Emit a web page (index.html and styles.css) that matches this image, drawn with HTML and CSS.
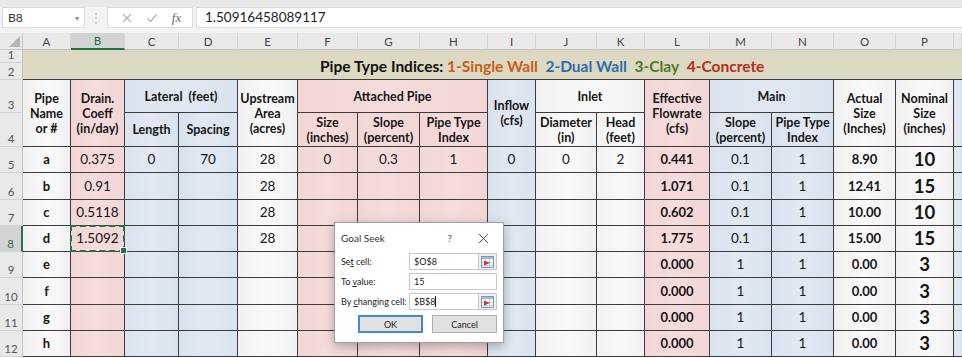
FILE: index.html
```html
<!DOCTYPE html>
<html lang="en">

<head>
  <meta charset="UTF-8">
  <title>Pipe Sizing - Goal Seek</title>
  <link rel="stylesheet" href="styles.css">
</head>

<body>
  <div class="formula-bar">
    <div class="name-box"><span>B8</span><span class="caret">&#9662;</span></div>
    <div class="grip">&#8942;</div>
    <div class="fx-buttons">
      <svg width="12" height="12" viewBox="0 0 12 12"><path d="M2 2l8 8M10 2l-8 8" stroke="#b4b4b4" stroke-width="1.2" fill="none"/></svg>
      <svg width="12" height="12" viewBox="0 0 12 12"><path d="M1.5 6.5l3 3 6-7" stroke="#b4b4b4" stroke-width="1.2" fill="none"/></svg>
      <span class="fx">fx</span>
    </div>
    <div class="formula-input">1.50916458089117</div>
  </div>

  <div class="sheet">
    <!-- column headers -->
    <div class="corner"></div>
    <div class="col-head">A</div>
    <div class="col-head active">B</div>
    <div class="col-head">C</div>
    <div class="col-head">D</div>
    <div class="col-head">E</div>
    <div class="col-head">F</div>
    <div class="col-head">G</div>
    <div class="col-head">H</div>
    <div class="col-head">I</div>
    <div class="col-head">J</div>
    <div class="col-head">K</div>
    <div class="col-head">L</div>
    <div class="col-head">M</div>
    <div class="col-head">N</div>
    <div class="col-head">O</div>
    <div class="col-head">P</div>
    <div class="col-head"></div>

    <!-- rows 1-2 -->
    <div class="row-head">1</div>
    <div class="title">Pipe Type Indices:&nbsp;<span class="t1">1-Single Wall</span>&nbsp;&nbsp;<span class="t2">2-Dual Wall</span>&nbsp;&nbsp;<span class="t3">3-Clay</span>&nbsp;&nbsp;<span class="t4">4-Concrete</span></div>
    <div class="row-head">2</div>

    <!-- rows 3-4 -->
    <div class="row-head">3</div>
    <div class="c hd wh span2">Pipe<br>Name<br>or #</div>
    <div class="c hd pk span2">Drain.<br>Coeff<br>(in/day)</div>
    <div class="c hd bl wide2">Lateral&nbsp; (feet)</div>
    <div class="c hd wh span2">Upstream<br>Area<br>(acres)</div>
    <div class="c hd pk wide3">Attached Pipe</div>
    <div class="c hd bl span2">Inflow<br>(cfs)</div>
    <div class="c hd wh wide2">Inlet</div>
    <div class="c hd pk span2">Effective<br>Flowrate<br>(cfs)</div>
    <div class="c hd bl wide2">Main</div>
    <div class="c hd wh span2">Actual Size<br>(Inches)</div>
    <div class="c hd wh span2">Nominal<br>Size<br>(inches)</div>
    <div class="c bl span2 last"></div>
    <div class="row-head">4</div>
    <div class="c hd bl">Length</div>
    <div class="c hd bl">Spacing</div>
    <div class="c hd pk">Size<br>(inches)</div>
    <div class="c hd pk">Slope<br>(percent)</div>
    <div class="c hd pk">Pipe Type<br>Index</div>
    <div class="c hd wh">Diameter<br>(in)</div>
    <div class="c hd wh">Head<br>(feet)</div>
    <div class="c hd bl">Slope<br>(percent)</div>
    <div class="c hd bl">Pipe Type<br>Index</div>

    <!-- row 5 -->
    <div class="row-head">5</div>
    <div class="c wh b">a</div>
    <div class="c pk">0.375</div>
    <div class="c bl">0</div>
    <div class="c bl">70</div>
    <div class="c wh">28</div>
    <div class="c pk">0</div>
    <div class="c pk">0.3</div>
    <div class="c pk">1</div>
    <div class="c bl">0</div>
    <div class="c wh">0</div>
    <div class="c wh">2</div>
    <div class="c pk b">0.441</div>
    <div class="c bl">0.1</div>
    <div class="c bl">1</div>
    <div class="c wh b">8.90</div>
    <div class="c wh big">10</div>
    <div class="c bl last"></div>

    <!-- row 6 -->
    <div class="row-head">6</div>
    <div class="c wh b">b</div>
    <div class="c pk">0.91</div>
    <div class="c bl"></div>
    <div class="c bl"></div>
    <div class="c wh">28</div>
    <div class="c pk"></div>
    <div class="c pk"></div>
    <div class="c pk"></div>
    <div class="c bl"></div>
    <div class="c wh"></div>
    <div class="c wh"></div>
    <div class="c pk b">1.071</div>
    <div class="c bl">0.1</div>
    <div class="c bl">1</div>
    <div class="c wh b">12.41</div>
    <div class="c wh big">15</div>
    <div class="c bl last"></div>

    <!-- row 7 -->
    <div class="row-head">7</div>
    <div class="c wh b">c</div>
    <div class="c pk">0.5118</div>
    <div class="c bl"></div>
    <div class="c bl"></div>
    <div class="c wh">28</div>
    <div class="c pk"></div>
    <div class="c pk"></div>
    <div class="c pk"></div>
    <div class="c bl"></div>
    <div class="c wh"></div>
    <div class="c wh"></div>
    <div class="c pk b">0.602</div>
    <div class="c bl">0.1</div>
    <div class="c bl">1</div>
    <div class="c wh b">10.00</div>
    <div class="c wh big">10</div>
    <div class="c bl last"></div>

    <!-- row 8 -->
    <div class="row-head active">8</div>
    <div class="c wh b">d</div>
    <div class="c pk sel">1.5092</div>
    <div class="c bl"></div>
    <div class="c bl"></div>
    <div class="c wh">28</div>
    <div class="c pk"></div>
    <div class="c pk"></div>
    <div class="c pk"></div>
    <div class="c bl"></div>
    <div class="c wh"></div>
    <div class="c wh"></div>
    <div class="c pk b">1.775</div>
    <div class="c bl">0.1</div>
    <div class="c bl">1</div>
    <div class="c wh b">15.00</div>
    <div class="c wh big">15</div>
    <div class="c bl last"></div>

    <!-- row 9 -->
    <div class="row-head">9</div>
    <div class="c wh b">e</div>
    <div class="c pk"></div>
    <div class="c bl"></div>
    <div class="c bl"></div>
    <div class="c wh"></div>
    <div class="c pk"></div>
    <div class="c pk"></div>
    <div class="c pk"></div>
    <div class="c bl"></div>
    <div class="c wh"></div>
    <div class="c wh"></div>
    <div class="c pk b">0.000</div>
    <div class="c bl">1</div>
    <div class="c bl">1</div>
    <div class="c wh b">0.00</div>
    <div class="c wh big">3</div>
    <div class="c bl last"></div>

    <!-- row 10 -->
    <div class="row-head">10</div>
    <div class="c wh b">f</div>
    <div class="c pk"></div>
    <div class="c bl"></div>
    <div class="c bl"></div>
    <div class="c wh"></div>
    <div class="c pk"></div>
    <div class="c pk"></div>
    <div class="c pk"></div>
    <div class="c bl"></div>
    <div class="c wh"></div>
    <div class="c wh"></div>
    <div class="c pk b">0.000</div>
    <div class="c bl">1</div>
    <div class="c bl">1</div>
    <div class="c wh b">0.00</div>
    <div class="c wh big">3</div>
    <div class="c bl last"></div>

    <!-- row 11 -->
    <div class="row-head">11</div>
    <div class="c wh b">g</div>
    <div class="c pk"></div>
    <div class="c bl"></div>
    <div class="c bl"></div>
    <div class="c wh"></div>
    <div class="c pk"></div>
    <div class="c pk"></div>
    <div class="c pk"></div>
    <div class="c bl"></div>
    <div class="c wh"></div>
    <div class="c wh"></div>
    <div class="c pk b">0.000</div>
    <div class="c bl">1</div>
    <div class="c bl">1</div>
    <div class="c wh b">0.00</div>
    <div class="c wh big">3</div>
    <div class="c bl last"></div>

    <!-- row 12 -->
    <div class="row-head">12</div>
    <div class="c wh b">h</div>
    <div class="c pk"></div>
    <div class="c bl"></div>
    <div class="c bl"></div>
    <div class="c wh"></div>
    <div class="c pk"></div>
    <div class="c pk"></div>
    <div class="c pk"></div>
    <div class="c bl"></div>
    <div class="c wh"></div>
    <div class="c wh"></div>
    <div class="c pk b">0.000</div>
    <div class="c bl">1</div>
    <div class="c bl">1</div>
    <div class="c wh b">0.00</div>
    <div class="c wh big">3</div>
    <div class="c bl last"></div>
  </div>

  <div class="dialog">
    <div class="dlg-title">
      <span>Goal Seek</span>
      <span class="help">?</span>
      <svg class="close" width="11" height="11" viewBox="0 0 11 11"><path d="M1 1l9 9M10 1l-9 9" stroke="#555" stroke-width="1" fill="none"/></svg>
    </div>
    <div class="dlg-row">
      <label>Se<u>t</u> cell:</label>
      <div class="field">$O$8</div>
      <span class="picker">
        <svg width="13" height="12" viewBox="0 0 13 12"><rect x="0.5" y="0.5" width="12" height="11" fill="#fff" stroke="#7a98bf"/><rect x="1" y="1" width="11" height="2" fill="#9db9dc"/><path d="M1 6.5h11M1 9.5h11M4.5 3v8M8.5 3v8" stroke="#b9c9dd"/><path d="M3 4.5l6 2.5-6 2.5z" fill="#d9312b"/></svg>
      </span>
    </div>
    <div class="dlg-row">
      <label>To <u>v</u>alue:</label>
      <div class="field full">15</div>
    </div>
    <div class="dlg-row">
      <label>By <u>c</u>hanging cell:</label>
      <div class="field">$B$8<span class="cursor"></span></div>
      <span class="picker">
        <svg width="13" height="12" viewBox="0 0 13 12"><rect x="0.5" y="0.5" width="12" height="11" fill="#fff" stroke="#7a98bf"/><rect x="1" y="1" width="11" height="2" fill="#9db9dc"/><path d="M1 6.5h11M1 9.5h11M4.5 3v8M8.5 3v8" stroke="#b9c9dd"/><path d="M3 4.5l6 2.5-6 2.5z" fill="#d9312b"/></svg>
      </span>
    </div>
    <div class="dlg-buttons">
      <button class="btn default">OK</button>
      <button class="btn">Cancel</button>
    </div>
  </div>
</body>

</html>
```

FILE: styles.css
```css
* {
  box-sizing: border-box;
  margin: 0;
  padding: 0;
}

body {
  width: 962px;
  height: 358px;
  overflow: hidden;
  position: relative;
  background: #fff;
  font-family: 'Lato', sans-serif;
  color: #111;
}

/* formula bar */
.formula-bar {
  height: 33px;
  background: #f3f3f3;
  border-top: 7px solid #e8e8e8;
  display: flex;
  align-items: flex-start;
}

.name-box {
  width: 83px;
  height: 21px;
  margin-left: 2px;
  background: #fff;
  border: 1px solid #dcdcdc;
  display: flex;
  align-items: center;
  justify-content: space-between;
  padding: 0 5px;
  font-size: 12px;
  color: #333;
}

.name-box .caret {
  font-size: 8px;
  color: #888;
}

.grip {
  width: 22px;
  height: 21px;
  text-align: center;
  line-height: 21px;
  color: #c0c0c0;
  font-size: 12px;
}

.fx-buttons {
  width: 86px;
  height: 21px;
  background: #fff;
  border: 1px solid #dcdcdc;
  display: flex;
  align-items: center;
  justify-content: space-around;
  padding: 0 4px 0 6px;
}

.fx {
  font-family: 'Liberation Serif', serif;
  font-style: italic;
  font-size: 13px;
  color: #666;
}

.formula-input {
  flex: 1;
  height: 21px;
  margin-left: 3px;
  background: #fff;
  border: 1px solid #dcdcdc;
  border-right: none;
  padding-left: 8px;
  font-size: 13.5px;
  line-height: 19px;
  color: #222;
}

/* sheet grid */
.sheet {
  display: grid;
  grid-template-columns: 23px 48px 54px 54px 59px 60px 60px 62px 68px 48px 61px 48px 65px 62px 62px 62px 58px 1fr;
  grid-template-rows: 17px 13px 17px 33px 34px 26px 27px 26px 26px 26px 27px 26px 26px;
}

.corner {
  background: #e9e9e9;
  border-right: 1px solid #c8c8c8;
  border-bottom: 1px solid #c8c8c8;
  position: relative;
}

.corner::after {
  content: '';
  position: absolute;
  right: 2px;
  bottom: 2px;
  border-left: 11px solid transparent;
  border-bottom: 11px solid #b7b7b7;
}

.col-head {
  background: #e9e9e9;
  border-right: 1px solid #d4d4d4;
  border-bottom: 1px solid #c4c4c4;
  font-size: 11.5px;
  color: #444;
  display: flex;
  align-items: center;
  justify-content: center;
}

.col-head.active {
  background: #d3d3d3;
  color: #217346;
  border-bottom: 2px solid #217346;
}

.row-head {
  background: #e9e9e9;
  border-right: 1px solid #c4c4c4;
  border-bottom: 1px solid #d4d4d4;
  font-size: 11.5px;
  color: #555;
  display: flex;
  align-items: flex-end;
  justify-content: center;
  padding-bottom: 1px;
  line-height: 12px;
}

.row-head.active {
  background: #d3d3d3;
  color: #217346;
  border-right: 2px solid #217346;
}

.title {
  grid-column: 2 / -1;
  grid-row: span 2;
  background: #ddd8c1;
  border-bottom: 1px solid #3c3c3c;
  display: flex;
  align-items: center;
  padding-left: 297px;
  padding-top: 2px;
  font-size: 15.5px;
  font-weight: 700;
  color: #111;
  white-space: nowrap;
}

.t1 { color: #c5621a; }
.t2 { color: #2f6eae; }
.t3 { color: #4f7a28; }
.t4 { color: #b0321e; }

/* cells */
.c {
  display: flex;
  align-items: center;
  justify-content: center;
  text-align: center;
  border-right: 1px solid #3c3c3c;
  border-bottom: 1px solid #3c3c3c;
  font-size: 13.5px;
  line-height: 15px;
  color: #151515;
}

.c.last {
  border-right: none;
}

.hd {
  font-size: 12.5px;
  font-weight: 700;
  line-height: 15px;
}

.span2 { grid-row: span 2; }
.wide2 { grid-column: span 2; }
.wide3 { grid-column: span 3; }

.b { font-weight: 700; font-size: 13px; }
.big { font-weight: 700; font-size: 18.5px; }

.pk { background: linear-gradient(90deg, #f3d5d5, #f6dcdc 50%, #f3d5d5); }
.bl { background: linear-gradient(90deg, #d9e3ef, #e1e8f2 50%, #d9e3ef); }
.wh { background: linear-gradient(90deg, #f1f1f1, #f9f9f9 50%, #f1f1f1); }

.sel {
  position: relative;
}

.sel::after {
  content: '';
  position: absolute;
  left: -1px;
  top: -1px;
  right: -1px;
  bottom: -1px;
  border: 2px dashed #217346;
}

.sel::before {
  content: '';
  position: absolute;
  right: -3px;
  bottom: -3px;
  width: 5px;
  height: 5px;
  background: #217346;
  border: 1px solid #fff;
  z-index: 1;
}

/* goal seek dialog */
.dialog {
  position: absolute;
  left: 334px;
  top: 222px;
  width: 170px;
  height: 121px;
  background: #fff;
  border: 1px solid #a0a0a0;
  box-shadow: 0 3px 10px rgba(0, 0, 0, 0.28);
  padding: 0 6px;
  font-size: 9px;
  color: #222;
}

.dlg-title {
  height: 30px;
  display: flex;
  align-items: center;
  font-size: 10px;
  color: #333;
}

.dlg-title .help {
  margin-left: auto;
  margin-right: 26px;
  color: #555;
}

.dlg-title .close {
  margin-right: 8px;
}

.dlg-row {
  height: 17px;
  margin-bottom: 3px;
  display: flex;
  align-items: center;
}

.dlg-row label {
  width: 68px;
  white-space: nowrap;
}

.field {
  width: 70px;
  height: 17px;
  border: 1px solid #c8c8c8;
  padding-left: 4px;
  line-height: 15px;
  display: flex;
  align-items: center;
}

.field.full {
  width: 88px;
}

.cursor {
  width: 1px;
  height: 11px;
  background: #222;
}

.picker {
  width: 18px;
  height: 17px;
  border: 1px solid #c8c8c8;
  border-left: none;
  background: #f0f0f0;
  display: flex;
  align-items: center;
  justify-content: center;
}

.dlg-buttons {
  display: flex;
  gap: 9px;
  padding-left: 17px;
  margin-top: 5px;
}

.btn {
  width: 65px;
  height: 18px;
  background: #e1e1e1;
  border: 1px solid #adadad;
  font-family: 'Lato', sans-serif;
  font-size: 9px;
  color: #222;
}

.btn.default {
  border: 2px solid #3f8cc6;
}
```
